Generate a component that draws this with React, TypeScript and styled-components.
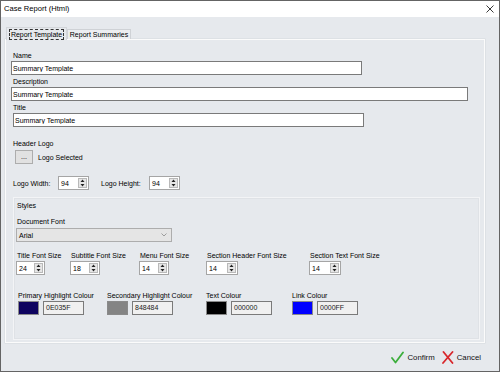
import styled, { createGlobalStyle } from "styled-components";

const GlobalStyle = createGlobalStyle`
  html, body {
    margin: 0;
    padding: 0;
  }
  body {
    font-family: "Liberation Sans", Arial, sans-serif;
    font-size: 7px;
    color: #000;
  }
`;

const Window = styled.div`
  width: 500px;
  height: 372px;
  box-sizing: border-box;
  border: 1px solid #646464;
  background: #e6e9ed;
  display: flex;
  flex-direction: column;
`;

const TitleBar = styled.div`
  height: 16px;
  background: #fff;
  display: flex;
  align-items: center;
  justify-content: space-between;
  padding: 0 5px 0 3px;
`;

const Caption = styled.span`
  font-size: 7.6px;
  line-height: 16px;
`;

const Body = styled.div`
  flex: 1;
  display: flex;
  flex-direction: column;
  padding: 9px 14px 0 4px;
`;

const TabStrip = styled.div`
  height: 13px;
  display: flex;
  align-items: flex-end;
`;

const Tab = styled.div<{ $active?: boolean }>`
  box-sizing: border-box;
  display: flex;
  align-items: center;
  justify-content: center;
  border: 1px solid ${(p) => (p.$active ? "#d3d6da" : "#cfd2d6")};
  border-bottom: none;
  background: ${(p) => (p.$active ? "#e6e9ed" : "#eceef1")};
  width: ${(p) => (p.$active ? "61px" : "64px")};
  height: ${(p) => (p.$active ? "13px" : "10px")};
  margin-left: ${(p) => (p.$active ? "1px" : "0")};
  margin-bottom: ${(p) => (p.$active ? "-1px" : "0")};
  position: relative;
  z-index: ${(p) => (p.$active ? 1 : 0)};
`;

const FocusLabel = styled.span`
  border: 1px dashed #333;
  padding: 0 1px;
  line-height: 9px;
`;

const TabPanel = styled.div`
  box-sizing: border-box;
  width: 480px;
  height: 304px;
  border: 1px solid #fbfbfb;
  box-shadow: 0 0 0 0.5px #d5d8dc;
  padding: 11px 0 0 5px;
  display: flex;
  flex-direction: column;
  align-items: flex-start;
`;

const Label = styled.div<{ $top?: number; $left?: number }>`
  line-height: 10px;
  height: 10px;
  margin-top: ${(p) => p.$top ?? 0}px;
  margin-left: ${(p) => p.$left ?? 2}px;
  white-space: nowrap;
`;

const TextInput = styled.input<{ $width: number; $left?: number }>`
  box-sizing: border-box;
  width: ${(p) => p.$width}px;
  height: 14px;
  margin: 0 0 0 ${(p) => p.$left ?? 0}px;
  padding: 0 1px;
  border: 1px solid #7a7a7a;
  background: #fff;
  font-family: "Liberation Sans", Arial, sans-serif;
  font-size: 7px;
  outline: none;
`;

const Row = styled.div<{ $top?: number; $left?: number }>`
  display: flex;
  align-items: center;
  margin-top: ${(p) => p.$top ?? 0}px;
  margin-left: ${(p) => p.$left ?? 0}px;
`;

const BrowseButton = styled.button`
  box-sizing: border-box;
  width: 18px;
  height: 14px;
  margin: 0 0 0 4px;
  padding: 0;
  border: 1px solid #adadad;
  background: #e1e1e1;
  font-family: "Liberation Sans", Arial, sans-serif;
  font-size: 7px;
  line-height: 8px;
`;

const InlineText = styled.span<{ $left?: number; $width?: number }>`
  margin-left: ${(p) => p.$left ?? 0}px;
  width: ${(p) => (p.$width ? `${p.$width}px` : "auto")};
  white-space: nowrap;
`;

const SpinBox = styled.div<{ $width: number }>`
  box-sizing: border-box;
  width: ${(p) => p.$width}px;
  height: 14px;
  border: 1px solid #a5a5a5;
  background: #fff;
  display: flex;
  align-items: center;
  justify-content: space-between;
  padding: 0 1px 0 2px;
`;

const SpinArrows = styled.div`
  box-sizing: border-box;
  width: 9px;
  height: 10px;
  background: #e6e6e6;
  border: 1px solid #b9b9b9;
  display: flex;
  align-items: center;
  justify-content: center;
`;

const Group = styled.div`
  box-sizing: border-box;
  width: 467px;
  height: 143px;
  margin: 7px 0 0 2px;
  border: 1px solid #f3f4f6;
  box-shadow: inset 0 0 0 1px #dfe2e6;
  padding: 3px 0 0 2px;
  display: flex;
  flex-direction: column;
  align-items: flex-start;
`;

const Select = styled.div`
  box-sizing: border-box;
  width: 156px;
  height: 14px;
  margin-top: 1px;
  border: 1px solid #adadad;
  background: #e5e5e5;
  display: flex;
  align-items: center;
  justify-content: space-between;
  padding: 0 4px 0 2px;
`;

const Columns = styled.div<{ $top: number }>`
  display: flex;
  margin-top: ${(p) => p.$top}px;
`;

const Column = styled.div<{ $width: number }>`
  width: ${(p) => p.$width}px;
  display: flex;
  flex-direction: column;
  align-items: flex-start;
`;

const ColourRow = styled.div`
  display: flex;
  gap: 4px;
  margin-left: 2px;
`;

const Swatch = styled.div<{ $color: string }>`
  box-sizing: border-box;
  width: 21px;
  height: 14px;
  border: 1px solid #8a8a8a;
  background: ${(p) => p.$color};
`;

const HexBox = styled.div`
  box-sizing: border-box;
  width: 41px;
  height: 14px;
  border: 1px solid #7a7a7a;
  background: #f0f0f0;
  padding-left: 2px;
  line-height: 12px;
  color: #222;
`;

const Footer = styled.div`
  height: 28px;
  display: flex;
  align-items: center;
  justify-content: flex-end;
  padding-right: 4px;
`;

const FooterButton = styled.div`
  display: flex;
  align-items: center;
  gap: 3px;
  margin-left: 7px;
  font-size: 7.8px;
  color: #111;
`;

function Spinner({ value, width = 30 }: { value: string; width?: number }) {
  return (
    <SpinBox $width={width}>
      <span>{value}</span>
      <SpinArrows>
        <svg width="5" height="8" viewBox="0 0 5 8">
          <path d="M2.5 0.5 L4.5 3 L0.5 3 Z" fill="#222" />
          <path d="M0.5 5 L4.5 5 L2.5 7.5 Z" fill="#222" />
        </svg>
      </SpinArrows>
    </SpinBox>
  );
}

const fontSizes = [
  { label: "Title Font Size", value: "24", col: 54, width: 29 },
  { label: "Subtitle Font Size", value: "18", col: 69, width: 30 },
  { label: "Menu Font Size", value: "14", col: 67, width: 30 },
  { label: "Section Header Font Size", value: "14", col: 103, width: 32 },
  { label: "Section Text Font Size", value: "14", col: 120, width: 32 },
];

const colours = [
  { label: "Primary Highlight Colour", value: "0E035F", col: 89 },
  { label: "Secondary Highlight Colour", value: "848484", col: 99 },
  { label: "Text Colour", value: "000000", col: 86 },
  { label: "Link Colour", value: "0000FF", col: 120 },
];

function App() {
  return (
    <>
      <GlobalStyle />
      <Window>
        <TitleBar>
          <Caption>Case Report (Html)</Caption>
          <svg width="8" height="8" viewBox="0 0 8 8">
            <path d="M0.5 0.5 L7.5 7.5 M7.5 0.5 L0.5 7.5" stroke="#222" strokeWidth="0.9" />
          </svg>
        </TitleBar>
        <Body>
          <TabStrip>
            <Tab $active>
              <FocusLabel>Report Template</FocusLabel>
            </Tab>
            <Tab>Report Summaries</Tab>
          </TabStrip>
          <TabPanel>
            <Label>Name</Label>
            <TextInput $width={351} readOnly value="Summary Template" />
            <Label $top={2}>Description</Label>
            <TextInput $width={457} readOnly value="Summary Template" />
            <Label $top={2}>Title</Label>
            <TextInput $width={351} $left={2} readOnly value="Summary Template" />
            <Label $top={12}>Header Logo</Label>
            <Row $top={1}>
              <BrowseButton>...</BrowseButton>
              <InlineText $left={5}>Logo Selected</InlineText>
            </Row>
            <Row $top={12} $left={2}>
              <InlineText $width={45}>Logo Width:</InlineText>
              <Spinner value="94" width={31} />
              <InlineText $left={12} $width={48}>
                Logo Height:
              </InlineText>
              <Spinner value="94" width={31} />
            </Row>
            <Group>
              <Label $left={1}>Styles</Label>
              <Label $top={6} $left={1}>
                Document Font
              </Label>
              <Select>
                <span>Arial</span>
                <svg width="6" height="4" viewBox="0 0 6 4">
                  <path d="M0.5 0.5 L3 3 L5.5 0.5" stroke="#8a8a8a" strokeWidth="0.8" fill="none" />
                </svg>
              </Select>
              <Columns $top={9}>
                {fontSizes.map((f) => (
                  <Column key={f.label} $width={f.col}>
                    <Label $left={1}>{f.label}</Label>
                    <Spinner value={f.value} width={f.width} />
                  </Column>
                ))}
              </Columns>
              <Columns $top={16}>
                {colours.map((c) => (
                  <Column key={c.label} $width={c.col}>
                    <Label $left={2}>{c.label}</Label>
                    <ColourRow>
                      <Swatch $color={`#${c.value}`} />
                      <HexBox>{c.value}</HexBox>
                    </ColourRow>
                  </Column>
                ))}
              </Columns>
            </Group>
          </TabPanel>
          <Footer>
            <FooterButton>
              <svg width="13" height="13" viewBox="0 0 13 13">
                <path d="M1 7 L4.5 11.5 L12 1.5" stroke="#3cae3c" strokeWidth="1.8" fill="none" strokeLinecap="round" strokeLinejoin="round" />
              </svg>
              Confirm
            </FooterButton>
            <FooterButton>
              <svg width="12" height="13" viewBox="0 0 12 13">
                <path d="M1.5 1 L10.5 12 M10.5 1 L1 12" stroke="#d8262b" strokeWidth="1.8" fill="none" strokeLinecap="round" />
              </svg>
              Cancel
            </FooterButton>
          </Footer>
        </Body>
      </Window>
    </>
  );
}

export default App;
